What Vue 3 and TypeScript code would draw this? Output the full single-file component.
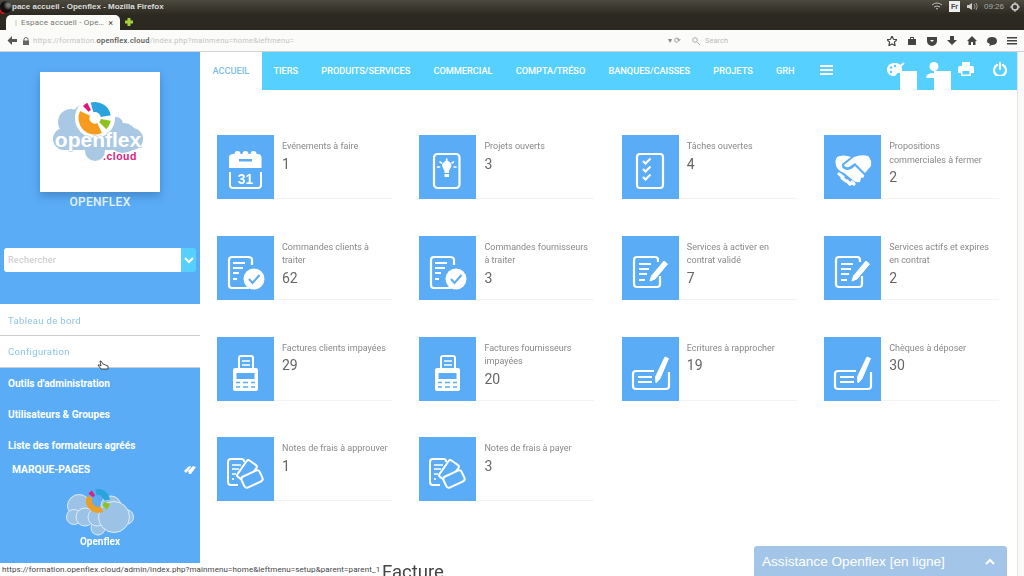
<template>
  <div class="screen">
    <svg class="defs" width="0" height="0">
      <defs>
        <symbol id="ic-calendar" viewBox="0 0 57 64">
          <path d="M12 33V23q0-4 4-4h1.500a3 3 0 0 1 6 0h2a3 3 0 0 1 6 0h2a3 3 0 0 1 6 0h1q4 0 4 4v10z" fill="#fff" />
          <rect x="22" y="24" width="13" height="2.500" fill="#5aacf6" />
          <path d="M13 37v13q0 3 3 3h25q3 0 3-3V37" fill="none" stroke="#fff" stroke-width="2" />
          <text x="28.500" y="49" text-anchor="middle" fill="#fff" font-family="Liberation Sans, sans-serif" font-weight="700" font-size="14">31</text>
        </symbol>
        <symbol id="ic-bulb" viewBox="0 0 57 64">
          <rect x="15" y="19" width="25.500" height="34" rx="3.500" fill="none" stroke="#fff" stroke-width="2.200" />
          <path d="M24 33a4.500 4.500 0 1 1 7.500 0l-1.500 3v2h-4.500v-2z" fill="#fff" />
          <rect x="25.500" y="39" width="4.500" height="3" fill="#fff" />
          <path d="M27.700 24v2M21 27l1.500 1M34.500 27 33 28M18.500 32h2M35 32h2" stroke="#fff" stroke-width="1.600" stroke-linecap="round" />
        </symbol>
        <symbol id="ic-tasks" viewBox="0 0 57 64">
          <rect x="15" y="19" width="26" height="34" rx="3" fill="none" stroke="#fff" stroke-width="2.200" />
          <path d="M21 26l2.500 2.500 5-5M21 34l2.500 2.500 5-5M21 42l2.500 2.500 5-5" fill="none" stroke="#fff" stroke-width="2.200" />
        </symbol>
        <symbol id="ic-hands" viewBox="0 0 57 64">
          <path d="M30 22Q38 19 44 21 48 25 47 31L41 38 31 28 25 32Q21 33 20 30Z" fill="#fff" />
          <path d="M13 22Q19 19 27 22L18 29Q17 34 23 35 27 35 31 31L40 40Q41 43 37 43L36 47Q33 48 30 46L20 38Q15 36 13 33 10 27 13 22Z" fill="#fff" />
          <path d="M15 39l4 3M18 43l4 3M23 46l3 3M28 47l2 2" stroke="#fff" stroke-width="3.200" stroke-linecap="round" />
        </symbol>
        <symbol id="ic-check" viewBox="0 0 57 64">
          <path d="M31 21H15q-3 0-3 3v25q0 3 3 3h17" fill="none" stroke="#fff" stroke-width="2.200" />
          <path d="M31 21q4 0 4 3v5" fill="none" stroke="#fff" stroke-width="2.200" />
          <path d="M16 27h12M16 32h10M16 37h6M16 43h4" stroke="#fff" stroke-width="2" />
          <circle cx="37" cy="43" r="10.500" fill="#fff" />
          <path d="M32 43l3.500 4 7-8" fill="none" stroke="#5aacf6" stroke-width="2" />
        </symbol>
        <symbol id="ic-pen" viewBox="0 0 57 64">
          <path d="M36 26v-2q0-3-3-3H15q-3 0-3 3v24q0 3 3 3h20q3 0 3-3v-8" fill="none" stroke="#fff" stroke-width="2.200" />
          <path d="M17 28h12M17 33h10M17 38h8M17 44h6" stroke="#fff" stroke-width="2" />
          <path d="M42 25l3.500 3L33 43l-5 2 1.500-5z" fill="#fff" stroke="#fff" stroke-linejoin="round" />
        </symbol>
        <symbol id="ic-fax" viewBox="0 0 57 64">
          <path d="M22 31V21q0-2 2-2h10q2 0 2 2v10" fill="none" stroke="#fff" stroke-width="2" />
          <path d="M25 24h8M25 28h8" stroke="#fff" stroke-width="1.500" />
          <rect x="16" y="31" width="25" height="23" rx="2" fill="#fff" />
          <rect x="19.500" y="36" width="18" height="6" fill="#5aacf6" />
          <path d="M19 45.500h4M26 45.500h5M34 45.500h4M19 50h4M26 50h5M34 50h4" stroke="#5aacf6" stroke-width="1.300" />
        </symbol>
        <symbol id="ic-tickets" viewBox="0 0 57 64">
          <path d="M27 25v-1q0-2-3-2H14q-3 0-3 3v20q0 3 3 3h7" fill="none" stroke="#fff" stroke-width="2" />
          <path d="M15 28h9M15 32h7M15 37h4M15 42h2" stroke="#fff" stroke-width="1.700" />
          <rect x="20" y="28" width="20" height="12" rx="2" transform="rotate(-55 30 34)" fill="#5aacf6" stroke="#fff" stroke-width="2" />
          <rect x="25" y="36" width="20" height="12" rx="3" transform="rotate(-25 35 42)" fill="#5aacf6" stroke="#fff" stroke-width="2" />
        </symbol>
        <symbol id="ic-cheque" viewBox="0 0 57 64">
          <path d="M32 34H14q-3 0-3 3v12q0 3 3 3h30q3 0 3-3V35" fill="none" stroke="#fff" stroke-width="2.200" />
          <path d="M16 40h14M16 45h14" stroke="#fff" stroke-width="2" />
          <path d="M43 20l3.500 1.500-8.500 20-4 4.500-.5-6z" fill="#fff" stroke="#fff" stroke-linejoin="round" />
        </symbol>
      </defs>
    </svg>

    <header class="ostitle">
      <div class="osrow">
        <span class="osbadge"></span>
        <span class="ostext">pace accueil - Openflex - Mozilla Firefox</span>
        <div class="tray">
          <svg width="12" height="9" viewBox="0 0 12 9"><path d="M1 3q5-4 10 0M3 5q3-2 6 0M5 7q1-1 2 0" fill="none" stroke="#bbb" /></svg>
          <span class="lang">Fr</span>
          <svg width="12" height="9" viewBox="0 0 12 9"><path d="M1 3h2l3-2v7L3 6H1z" fill="#ccc" /><path d="M8 2q2 2.500 0 5M10 1q2.500 3.500 0 7" fill="none" stroke="#999" /></svg>
          <span class="clock">09:26</span>
          <svg width="10" height="10" viewBox="0 0 10 10"><circle cx="5" cy="5" r="3" fill="none" stroke="#ccc" stroke-width="1.600" /><path d="M5 0v2M5 8v2M0 5h2M8 5h2" stroke="#ccc" /></svg>
        </div>
      </div>
      <div class="tabrow">
        <div class="tab">
          <span class="favicon"></span>
          <span class="tabtitle">Espace accueil - Ope…</span>
          <span class="tabclose">×</span>
        </div>
        <svg class="plus" width="10" height="10" viewBox="0 0 10 10"><path d="M5 1v8M1 5h8" stroke="#a6d33a" stroke-width="3" /></svg>
      </div>
    </header>

    <div class="navbar">
      <svg width="10" height="9" viewBox="0 0 10 9"><path d="M5 0 .5 4.500 5 9V6h5V3H5z" fill="#555" /></svg>
      <svg class="lock" width="6" height="8" viewBox="0 0 6 8"><path d="M1 4V2.500a2 2 0 0 1 4 0V4" fill="none" stroke="#666" /><rect y="3.500" width="6" height="4.500" fill="#666" /></svg>
      <div class="url">
        <span class="faint">https://formation.</span><span class="domain">openflex.cloud</span><span class="faint">/index.php?mainmenu=home&amp;leftmenu=</span>
      </div>
      <span class="urlend">▾ ⟳</span>
      <div class="search">
        <svg width="8" height="8" viewBox="0 0 8 8"><circle cx="3" cy="3" r="2.300" fill="none" stroke="#aaa" /><path d="M5 5l3 3" stroke="#aaa" /></svg>
        <span>Search</span>
      </div>
      <div class="tools">
        <svg v-for="t in toolbar" :key="t" width="10" height="10" viewBox="0 0 10 10"><path :d="t" fill="#444" /></svg>
      </div>
    </div>

    <div class="page">
      <aside class="side">
        <div class="logobox">
          <svg width="120" height="120" viewBox="0 0 120 120">
            <g fill="#a9c8e4">
              <circle cx="31" cy="50" r="13" /><circle cx="46" cy="46" r="14" /><circle cx="76" cy="52" r="7" />
              <circle cx="83" cy="66" r="15" /><circle cx="55" cy="79" r="10" /><circle cx="28" cy="66" r="10" />
              <rect x="13" y="56" width="90" height="22" rx="11" />
            </g>
            <circle cx="55" cy="46" r="20" fill="#fff" />
            <g fill="none" stroke-width="10">
              <path d="M59.600 56A11 11 0 0 1 45 41.300" stroke="#f79a1e" stroke-width="11" />
              <path d="M52 35.400A11 11 0 0 1 65.800 44.100" stroke="#2ba3dc" />
              <path d="M45.800 36.800A13 13 0 0 1 49.100 34.400" stroke="#e2137e" stroke-width="8" />
              <path d="M65.800 47.900A11 11 0 0 1 62.800 53.800" stroke="#8ec31f" />
            </g>
            <text x="58" y="75" text-anchor="middle" class="logotext openword">openflex</text>
            <text x="80" y="88" text-anchor="middle" class="logotext cloudword">.cloud</text>
          </svg>
        </div>
        <div class="brand">OPENFLEX</div>
        <div class="searchwrap">
          <div class="searchinput">Rechercher</div>
          <div class="searchbtn"><svg width="10" height="7" viewBox="0 0 10 7"><path d="M1 1l4 4 4-4" fill="none" stroke="#fff" stroke-width="2" /></svg></div>
        </div>
        <div class="mainlinks">
          <a class="mainlink">Tableau de bord</a>
          <a class="mainlink boxed">Configuration
            <svg class="cursor" width="12" height="11" viewBox="0 0 12 11"><path d="M1 5l3 4h7V6L6 4 4 1 3 1l1 5-1-1z" fill="#fff" stroke="#222" stroke-width=".8" /></svg>
          </a>
        </div>
        <div class="sublinks">
          <a v-for="s in sublinks" :key="s">{{ s }}</a>
        </div>
        <div class="marks">
          <span>MARQUE-PAGES</span>
          <svg width="13" height="10" viewBox="0 0 13 10"><path d="M1 6l4-4 2-1 1 1-5 6zM5 6l5-5 3 1-5 7H6z" fill="#fff" /></svg>
        </div>
        <div class="sidelogo">
          <svg width="68" height="48" viewBox="0 0 68 48">
            <g fill="#9cc3e6" stroke="#dcebf9" stroke-width="1">
              <circle cx="13" cy="18" r="11.500" /><circle cx="45" cy="18" r="10" /><circle cx="32" cy="40" r="7" />
              <circle cx="8" cy="29" r="7.500" /><circle cx="19" cy="29" r="9" /><circle cx="60" cy="29" r="7.500" />
              <circle cx="31" cy="29" r="9" /><circle cx="48" cy="29" r="15.500" />
            </g>
            <g fill="none" stroke-width="6">
              <path d="M36 21A9 9 0 0 1 24 9" stroke="#e8a02c" />
              <path d="M30 4.300A9 9 0 0 1 41 12" stroke="#2ba3dc" />
              <path d="M24.800 7.500A9 9 0 0 1 27.500 5" stroke="#d5267f" />
              <path d="M41 15A9 9 0 0 1 38.500 19.500" stroke="#8ec31f" />
            </g>
          </svg>
          <div>Openflex</div>
        </div>
      </aside>

      <main class="content">
        <nav class="topbar">
          <a class="tabitem active">ACCUEIL</a>
          <a v-for="m in menu" :key="m" class="tabitem">{{ m }}</a>
          <span class="burger"><i></i><i></i><i></i></span>
          <div class="topicons">
            <span class="topicon palette">
              <svg width="18" height="14" viewBox="0 0 18 14"><path d="M8 1C3 1 0 3.500 0 7.500S3 14 7 14c3 0 2-3 4-3 3 0 4-1 4-4 0-4-3-6-7-6z" fill="#fff" /><path d="M10 7l7-6" stroke="#fff" stroke-width="2" /><circle cx="4" cy="5.500" r="1.200" fill="#56d0ff" /><circle cx="4" cy="10" r="1.200" fill="#56d0ff" /><circle cx="8" cy="4" r="1.200" fill="#56d0ff" /></svg>
            </span>
            <span class="topicon person">
              <svg width="18" height="16" viewBox="0 0 18 16"><circle cx="9" cy="4.500" r="4.500" fill="#fff" /><path d="M1 16q0-5 8-5t8 5z" fill="#fff" /></svg>
            </span>
            <span class="topicon printer">
              <svg width="16" height="14" viewBox="0 0 16 14"><path d="M4 4V0h8v4h2q2 0 2 2v5h-3v3H3v-3H0V6q0-2 2-2z" fill="#fff" /><rect x="4.500" y="9" width="7" height="3.500" fill="#56d0ff" /></svg>
            </span>
            <span class="topicon power">
              <svg width="14" height="14" viewBox="0 0 14 14"><path d="M4 3a6 6 0 1 0 6 0" fill="none" stroke="#fff" stroke-width="2.200" stroke-linecap="round" /><path d="M7 1v6" stroke="#fff" stroke-width="2.200" stroke-linecap="round" /></svg>
            </span>
          </div>
        </nav>

        <section class="grid">
          <article v-for="c in cards" :key="c.label" class="card">
            <div class="tile"><svg width="57" height="64"><use :href="'#ic-' + c.icon" /></svg></div>
            <div class="info">
              <div class="label">{{ c.label }}</div>
              <div class="count">{{ c.count }}</div>
            </div>
          </article>
        </section>

        <h2 class="title">Facture</h2>
      </main>
      <div class="scrollbar"></div>
    </div>

    <div class="status">https://formation.openflex.cloud/admin/index.php?mainmenu=home&amp;leftmenu=setup&amp;parent=parent_1</div>
    <div class="chat">
      <span>Assistance Openflex [en ligne]</span>
      <svg width="10" height="7" viewBox="0 0 10 7"><path d="M1 6l4-4 4 4" fill="none" stroke="#fff" stroke-width="2" /></svg>
    </div>
  </div>
</template>

<script setup lang="ts">
interface Card {
  icon: string
  label: string
  count: number
}

const menu: string[] = ['TIERS', 'PRODUITS/SERVICES', 'COMMERCIAL', 'COMPTA/TRÉSO', 'BANQUES/CAISSES', 'PROJETS', 'GRH']
const sublinks: string[] = ["Outils d'administration", 'Utilisateurs & Groupes', 'Liste des formateurs agréés']

const toolbar: string[] = [
  'M5 0l1.500 3.300 3.500.4-2.600 2.400.7 3.600L5 8 1.900 9.700l.7-3.600L0 3.700l3.500-.4z',
  'M3 1h4v2h2v6H1V3h2zM4 2v1h2V2z',
  'M0 1h10v4a5 5 0 0 1-10 0zM3 4l2 2 2-2z',
  'M3 0h4v4h3L5 9 0 4h3z',
  'M5 0l5 5H8.500v4H6V6H4v3H1.500V5H0z',
  'M5 1c3 0 5 1.500 5 4s-2 4-5 4l-3 1 1-2C1 7 0 6.500 0 5c0-2.500 2-4 5-4z',
  'M0 1h10v1.500H0zM0 4h10v1.500H0zM0 7h10v1.500H0z',
]

const cards: Card[] = [
  { icon: 'calendar', label: 'Evénements à faire', count: 1 },
  { icon: 'bulb', label: 'Projets ouverts', count: 3 },
  { icon: 'tasks', label: 'Tâches ouvertes', count: 4 },
  { icon: 'hands', label: 'Propositions commerciales à fermer', count: 2 },
  { icon: 'check', label: 'Commandes clients à traiter', count: 62 },
  { icon: 'check', label: 'Commandes fournisseurs à traiter', count: 3 },
  { icon: 'pen', label: 'Services à activer en contrat validé', count: 7 },
  { icon: 'pen', label: 'Services actifs et expires en contrat', count: 2 },
  { icon: 'fax', label: 'Factures clients impayées', count: 29 },
  { icon: 'fax', label: 'Factures fournisseurs impayées', count: 20 },
  { icon: 'cheque', label: 'Ecritures à rapprocher', count: 19 },
  { icon: 'cheque', label: 'Chèques à déposer', count: 30 },
  { icon: 'tickets', label: 'Notes de frais à approuver', count: 1 },
  { icon: 'tickets', label: 'Notes de frais à payer', count: 3 },
]
</script>

<style>
html,
body {
  margin: 0;
  overflow: hidden;
  background: #fff;
}
</style>

<style scoped>
.screen {
  position: relative;
  width: 1024px;
  height: 576px;
  overflow: hidden;
  display: flex;
  flex-direction: column;
  font-family: Roboto, "Liberation Sans", sans-serif;
  filter: blur(0.5px);
}

.defs {
  position: absolute;
}

.ostitle {
  height: 30px;
  flex: none;
  background: linear-gradient(#4c493f, #2b2920 50%, #2a2820);
}

.osrow {
  height: 13px;
  display: flex;
  align-items: center;
  font-family: "Liberation Sans", sans-serif;
  font-size: 8px;
  font-weight: 700;
  color: #ddd;
}

.osbadge {
  width: 12px;
  height: 12px;
  border-radius: 50%;
  background: radial-gradient(circle at 70% 35%, #777 12%, #111 45%, #111 70%);
  box-shadow: -3px 4px 0 -3px #e01010;
}

.tray {
  margin-left: auto;
  padding-right: 4px;
  display: flex;
  align-items: center;
  gap: 6px;
  font-weight: 400;
}

.lang {
  width: 11px;
  height: 11px;
  background: #eee;
  color: #444;
  font-size: 7px;
  font-weight: 700;
  text-align: center;
  line-height: 11px;
}

.clock {
  color: #aaa;
  font-size: 8px;
}

.tabrow {
  height: 17px;
  display: flex;
  align-items: flex-end;
  padding-left: 6px;
}

.tab {
  width: 114px;
  height: 15px;
  box-sizing: border-box;
  padding: 0 7px 0 9px;
  background: #fbfbf8;
  border-radius: 5px 5px 0 0;
  display: flex;
  align-items: center;
  gap: 4px;
  font-size: 8px;
  color: #777;
}

.favicon {
  width: 5px;
  height: 6px;
  background: #dde5d8;
}

.tabtitle {
  flex: 1;
  white-space: nowrap;
  letter-spacing: 0.2px;
}

.tabclose {
  color: #444;
  font-size: 9px;
}

.plus {
  margin: 0 0 3px 4px;
}

.navbar {
  height: 22px;
  flex: none;
  box-sizing: border-box;
  display: flex;
  align-items: center;
  padding: 0 7px;
  background: #fbfbf9;
  border-bottom: 1px solid #d0d0d0;
  font-size: 7.500px;
  color: #c3c3c3;
}

.lock {
  margin-left: 6px;
}

.url {
  margin-left: 4px;
  width: 635px;
  white-space: nowrap;
  letter-spacing: 0.25px;
}

.domain {
  color: #555;
  font-weight: 500;
}

.urlend {
  width: 21px;
  color: #888;
}

.search {
  width: 190px;
  box-sizing: border-box;
  padding-left: 3px;
  display: flex;
  align-items: center;
  gap: 5px;
  color: #bbb;
}

.tools {
  margin-left: auto;
  display: flex;
  gap: 10px;
}

.tools svg:first-child path {
  fill: none;
  stroke: #444;
  stroke-width: 1.200;
}

.page {
  flex: 1;
  min-height: 0;
  display: flex;
}

.side {
  width: 200px;
  flex: none;
  background: #5aacf6;
  color: #fff;
  display: flex;
  flex-direction: column;
}

.logobox {
  width: 120px;
  height: 120px;
  margin: 20px auto 0;
  background: #fff;
  box-shadow: 0 4px 8px rgba(30, 70, 120, 0.35);
}

.logobox svg {
  display: block;
}

.logotext {
  font-family: "Liberation Sans", sans-serif;
  font-weight: 700;
}

.openword {
  font-size: 21px;
  fill: #fff;
  stroke: #a9c8e4;
  stroke-width: 1px;
  paint-order: stroke;
}

.cloudword {
  font-size: 10.500px;
  letter-spacing: 0.5px;
  fill: #d9207f;
}

.brand {
  margin-top: 3px;
  text-align: center;
  font-size: 12px;
  font-weight: 500;
  line-height: 14px;
  letter-spacing: 0.3px;
  color: #e4f2ff;
}

.searchwrap {
  margin: 39px 4px 0;
  height: 24px;
  display: flex;
  border-radius: 3px;
  overflow: hidden;
}

.searchinput {
  flex: 1;
  background: #fff;
  color: #c4c4c4;
  font-size: 9px;
  line-height: 24px;
  padding-left: 4px;
  letter-spacing: 0.3px;
}

.searchbtn {
  width: 15px;
  background: #56d0ff;
  display: flex;
  align-items: center;
  justify-content: center;
}

.mainlinks {
  margin-top: 32px;
  background: #fff;
}

.mainlink {
  display: block;
  position: relative;
  height: 31px;
  box-sizing: border-box;
  padding-left: 8px;
  font-size: 9.500px;
  line-height: 33px;
  letter-spacing: 0.35px;
  color: #8cc4e8;
}

.mainlink.boxed {
  height: 33px;
  line-height: 31px;
  border-top: 1px solid #ccc;
  border-bottom: 1px solid #ccc;
}

.cursor {
  position: absolute;
  left: 97px;
  top: 24px;
}

.sublinks a {
  display: block;
  height: 31px;
  box-sizing: border-box;
  padding-left: 8px;
  line-height: 31px;
  font-size: 10.100px;
  font-weight: 700;
  white-space: nowrap;
  color: #fff;
}

.marks {
  margin-top: 3px;
  padding: 0 4px 0 12px;
  display: flex;
  justify-content: space-between;
  align-items: center;
  font-size: 10.300px;
  font-weight: 700;
  line-height: 12px;
}

.sidelogo {
  margin-top: 12px;
  text-align: center;
  font-size: 10px;
  font-weight: 700;
  line-height: 12px;
}

.sidelogo svg {
  display: block;
  margin: 0 auto;
}

.content {
  flex: 1;
  min-width: 0;
  overflow: hidden;
}

.topbar {
  height: 38px;
  display: flex;
  align-items: center;
  background: #56d0ff;
  font-size: 9.200px;
  font-weight: 500;
  color: #fff;
}

.tabitem {
  padding: 0 11.600px;
  line-height: 38px;
  white-space: nowrap;
}

.tabitem.active {
  padding: 0 12.500px;
  background: #fff;
  color: #7cc0ea;
}

.burger {
  margin-left: 14px;
  display: flex;
  flex-direction: column;
  gap: 2px;
  margin-top: -3px;
}

.burger i {
  width: 13px;
  height: 2px;
  background: #fff;
}

.topicons {
  margin-left: auto;
  padding-right: 10px;
  align-self: flex-start;
  margin-top: 10px;
  display: flex;
}

.topicon {
  position: relative;
  display: block;
  height: 16px;
}

.topicon svg {
  display: block;
}

.palette {
  width: 38px;
}

.person {
  width: 33px;
}

.printer {
  width: 35px;
}

.power {
  width: 14px;
}

.palette::after,
.person::after {
  content: "";
  position: absolute;
  top: 9px;
  width: 17px;
  height: 19px;
  background: #fff;
}

.palette::after {
  left: 13px;
}

.person::after {
  left: 9px;
}

.grid {
  display: grid;
  grid-template-columns: repeat(4, 175px);
  column-gap: 27.400px;
  row-gap: 36.800px;
  padding: 45px 0 0 17px;
}

.card {
  display: flex;
  height: 64px;
}

.tile {
  width: 57px;
  height: 64px;
  flex: none;
  background: #5aacf6;
}

.tile svg {
  display: block;
}

.info {
  flex: 1;
  box-sizing: border-box;
  padding: 5px 4px 0 8px;
  border-bottom: 1px solid #f3f3f3;
}

.label {
  font-size: 9px;
  line-height: 13.500px;
  color: #888;
}

.count {
  margin-top: 1px;
  font-size: 14px;
  line-height: 18px;
  color: #666;
}

.title {
  margin: 59px 0 0 182px;
  font-size: 18.500px;
  line-height: 24px;
  font-weight: 400;
  color: #444;
}

.scrollbar {
  width: 7px;
  flex: none;
  background: #fafaf8;
  border-left: 1px solid #e4e4e0;
  box-sizing: border-box;
}

.status {
  position: absolute;
  left: 0;
  bottom: 0;
  height: 13px;
  padding: 0 1px 0 2px;
  background: #fff;
  font-size: 8px;
  line-height: 13px;
  color: #444;
  white-space: nowrap;
  letter-spacing: 0.1px;
}

.chat {
  position: absolute;
  left: 754px;
  bottom: 0;
  width: 253px;
  height: 30px;
  box-sizing: border-box;
  padding: 0 12px 0 8px;
  background: #a3c6e8;
  border-radius: 3px 3px 0 0;
  display: flex;
  align-items: center;
  justify-content: space-between;
  font-family: "Liberation Sans", sans-serif;
  font-size: 13.600px;
  color: #fff;
}
</style>
